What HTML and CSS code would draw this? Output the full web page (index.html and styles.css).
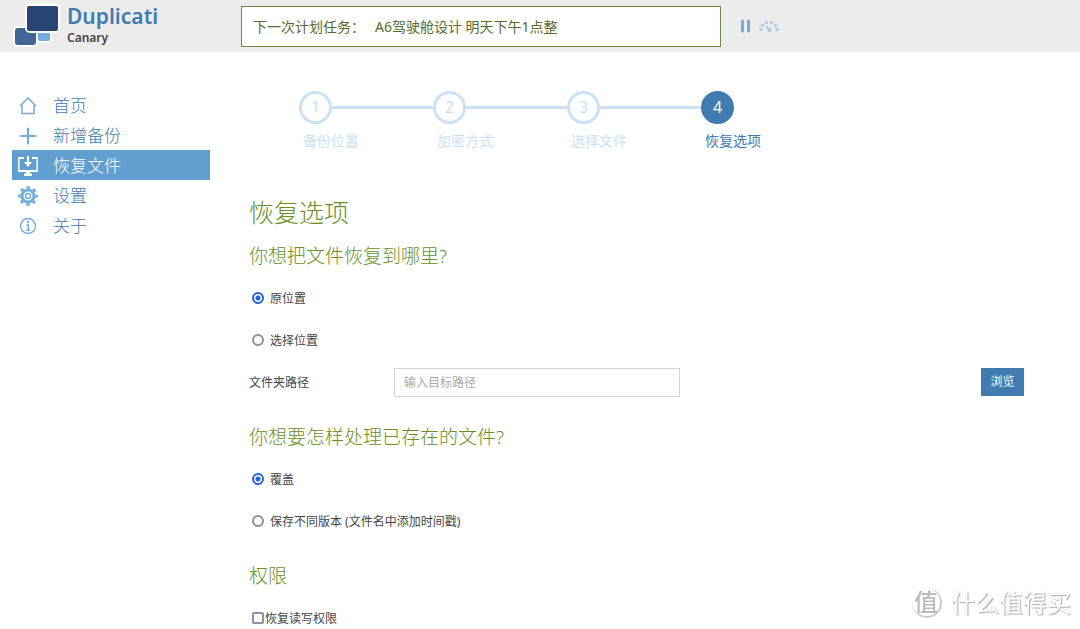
FILE: index.html
```html
<!DOCTYPE html>
<html lang="zh-CN">
<head>
<meta charset="utf-8">
<meta name="viewport" content="width=device-width, initial-scale=1">
<title>Duplicati</title>
<link rel="stylesheet" href="styles.css">
</head>
<body>
<header class="header">
  <a class="brand" href="#">
    <svg class="logo" width="48" height="46" viewBox="0 0 48 46" aria-hidden="true">
      <g stroke="#fff" stroke-width="2">
        <rect x="25" y="23" width="14" height="16" rx="3" fill="#74add9"/>
        <rect x="2" y="24" width="23" height="19" rx="4" fill="#416596"/>
        <rect x="14" y="1" width="33" height="28" rx="4" fill="#fff"/>
      </g>
      <rect x="15" y="3" width="31" height="25" rx="2" fill="#274472"/>
    </svg>
    <span class="brand-text"><span class="brand-name">Duplicati</span><span class="brand-channel">Canary</span></span>
  </a>
  <div class="status"><span>下一次计划任务：</span><span>A6驾驶舱设计 明天下午1点整</span></div>
  <div class="actions">
    <button type="button" aria-label="暂停">
      <svg width="11" height="14" viewBox="0 0 11 14"><path d="M2.500 2v10M8.500 2v10" stroke="#74add9" stroke-width="3" stroke-linecap="round"/></svg>
    </button>
    <button type="button" aria-label="限速">
      <svg width="20" height="12" viewBox="0 0 20 12"><g fill="#abcce4"><circle cx="1.800" cy="9.500" r="1.700"/><circle cx="3.500" cy="5.400" r="1.700"/><circle cx="7.500" cy="2.500" r="1.700"/><circle cx="12.500" cy="2.500" r="1.700"/><circle cx="16.500" cy="5.400" r="1.700"/><circle cx="18.200" cy="9.500" r="1.700"/><path d="M6.500 5.500l4.700 2.600a2 2 0 1 1-2.600 2.300z"/></g></svg>
    </button>
  </div>
</header>
<div class="page">
  <nav class="menu">
    <a href="#"><svg viewBox="0 0 20 20"><path d="M2 10l8-8 8 8M4 8.500v9h12v-9" fill="none" stroke="currentColor" stroke-width="1.500"/></svg>首页</a>
    <a href="#"><svg viewBox="0 0 20 20"><path d="M10 2.500v15M2.500 10h15" stroke="currentColor" stroke-width="2.200" stroke-linecap="round"/></svg>新增备份</a>
    <a href="#" class="active"><svg viewBox="0 0 20 20"><path d="M6 2H1.500Q.5 2 .5 3v11q0 1 1 1h17q1 0 1-1V3q0-1-1-1H14" fill="none" stroke="currentColor" stroke-width="2"/><path d="M9 0h2v6h3l-4 5-4-5h3zM8 15h4v2.500h2V20H6v-2.500h2z" fill="currentColor"/></svg>恢复文件</a>
    <a href="#"><svg viewBox="0 0 20 20"><g fill="none" stroke="currentColor"><circle cx="10" cy="10" r="6" stroke-width="3"/><circle cx="10" cy="10" r="2.500" stroke-width="1.500"/><circle cx="10" cy="10" r="8.500" stroke-width="2.600" stroke-dasharray="3.400 3.276" stroke-dashoffset="1.700"/></g></svg>设置</a>
    <a href="#"><svg viewBox="0 0 20 20"><circle cx="10" cy="10" r="7.500" fill="none" stroke="currentColor" stroke-width="1.400"/><circle cx="10" cy="6" r="1.200" fill="currentColor"/><path d="M8.500 9h1.800v5M8.300 14.200h3.800" fill="none" stroke="currentColor" stroke-width="1.600"/></svg>关于</a>
  </nav>
  <main class="content">
    <ol class="steps">
      <li><span class="num">1</span><span class="name">备份位置</span></li>
      <li><span class="num">2</span><span class="name">加密方式</span></li>
      <li><span class="num">3</span><span class="name">选择文件</span></li>
      <li class="current" aria-current="step"><span class="num">4</span><span class="name">恢复选项</span></li>
    </ol>
    <form class="form">
      <h1>恢复选项</h1>
      <section>
        <h2>你想把文件恢复到哪里?</h2>
        <div class="option"><input type="radio" name="location" id="original" checked><label for="original">原位置</label></div>
        <div class="option"><input type="radio" name="location" id="custom"><label for="custom">选择位置</label></div>
        <div class="path"><label for="path">文件夹路径</label><input type="text" id="path" placeholder="输入目标路径"><button type="button">浏览</button></div>
      </section>
      <section>
        <h2>你想要怎样处理已存在的文件?</h2>
        <div class="option"><input type="radio" name="existing" id="overwrite" checked><label for="overwrite">覆盖</label></div>
        <div class="option"><input type="radio" name="existing" id="versions"><label for="versions">保存不同版本 (文件名中添加时间戳)</label></div>
      </section>
      <section>
        <h2>权限</h2>
        <div class="option check"><input type="checkbox" id="permissions"><label for="permissions">恢复读写权限</label></div>
      </section>
    </form>
  </main>
</div>
<div class="watermark"><span class="seal">值</span><span>什么值得买</span></div>
</body>
</html>
```
FILE: styles.css
```css
* { box-sizing: border-box; }
html { scrollbar-width: none; }
body {
  margin: 0;
  background: #fff;
  color: #444;
  font: 12px/18px "Noto Sans", "Noto Sans CJK SC", sans-serif;
}
button, input { font: inherit; }
a { text-decoration: none; }

.header {
  display: flex;
  align-items: center;
  height: 52px;
  padding: 0 12px;
  background: #ececec;
}
.brand {
  display: flex;
  flex: 0 0 229px;
  gap: 7px;
}
.brand-text { display: flex; flex-direction: column; }
.brand-name { color: #417cb0; font-size: 21px; font-weight: 600; line-height: 26px; }
.brand-channel { color: #444; font-size: 12px; font-weight: 600; line-height: 18px; }
.status {
  display: flex;
  flex: 0 1 480px;
  gap: 10px;
  height: 41px;
  padding: 0 11px;
  border: 1px solid #6c8848;
  background: #fff;
  color: #556b2f;
  font-size: 14px;
  line-height: 39px;
  white-space: nowrap;
}
.actions { display: flex; align-items: center; gap: 8px; padding-left: 19px; }
.actions button { display: flex; padding: 0; border: 0; background: none; }

.page { display: flex; align-items: flex-start; }
.menu { flex: 0 0 210px; padding: 38px 0 0 12px; }
.menu a {
  display: flex;
  align-items: center;
  gap: 15px;
  height: 30px;
  padding: 1px 0 0 6px;
  color: #417cb0;
  font-size: 17px;
  font-weight: 300;
}
.menu svg { width: 20px; height: 20px; color: #74add9; }
.menu .active { background: #629fd1; color: #fff; }
.menu .active svg { color: #fff; }

.content { flex: 1; min-width: 0; padding: 39px 56px 0 39px; }
.steps {
  display: flex;
  margin: 0;
  padding: 0 0 0 50px;
  list-style: none;
  color: #c9e1f4;
}
.steps li {
  display: grid;
  grid-template-columns: 33px 101px;
  row-gap: 8px;
  align-items: center;
}
.steps li::after {
  grid-area: 1 / 2;
  height: 3px;
  background: #cde0f4;
  content: "";
}
.steps .current::after { display: none; }
.num {
  width: 33px;
  height: 33px;
  border: 3px solid #cbe2f4;
  border-radius: 50%;
  font-size: 16px;
  line-height: 27px;
  text-align: center;
}
.name { grid-area: 2 / 1 / 3 / 3; padding-left: 4px; font-size: 14px; line-height: 18px; }
.current { color: #417cb0; }
.current .num { border-color: #417cb0; background: #417cb0; color: #fff; }

h1, h2 { margin: 0; color: #6a8f28; font-weight: 300; }
h1 { padding-top: 45px; font-size: 25px; line-height: 34px; }
h2 { padding: 13px 0 7px; font-size: 19px; line-height: 28px; }
section + section { padding-top: 7px; }
.option { display: flex; align-items: center; height: 42px; padding-left: 3px; }
.option label, .path label { padding-top: 2px; }
.option input {
  width: 12px;
  height: 12px;
  margin: 0 6px 0 0;
  border: 2px solid #8f8f9d;
  border-radius: 50%;
  background: #fff;
  appearance: none;
}
.option input:checked { border-color: #2461d8; background: radial-gradient(#2461d8 2px, #fff 3px); }
.option.check input { margin-right: 1px; border-radius: 2px; }
.path { display: flex; align-items: center; height: 42px; }
.path label { width: 145px; }
.path input {
  width: 286px;
  height: 29px;
  padding: 0 9px;
  border: 1px solid #d4d4d4;
  color: #444;
}
.path input::placeholder { color: #aaa; }
.path button {
  width: 43px;
  height: 28px;
  margin-left: auto;
  padding: 0;
  border: 0;
  background: #417cb0;
  color: #fff;
}

.watermark {
  position: fixed;
  right: 9px;
  bottom: 10px;
  display: flex;
  align-items: center;
  gap: 9px;
  color: #fff;
  font-size: 24px;
  line-height: 32px;
  text-shadow: 1px 1px 1px #aaa, 0 0 1px #ccc;
}
.seal {
  width: 30px;
  height: 30px;
  border-right: 2px solid #ccc;
  border-bottom: 2px solid #ccc;
  border-radius: 50%;
  color: #bbb;
  font-weight: 500;
  line-height: 28px;
  text-align: center;
  text-shadow: none;
}
```
